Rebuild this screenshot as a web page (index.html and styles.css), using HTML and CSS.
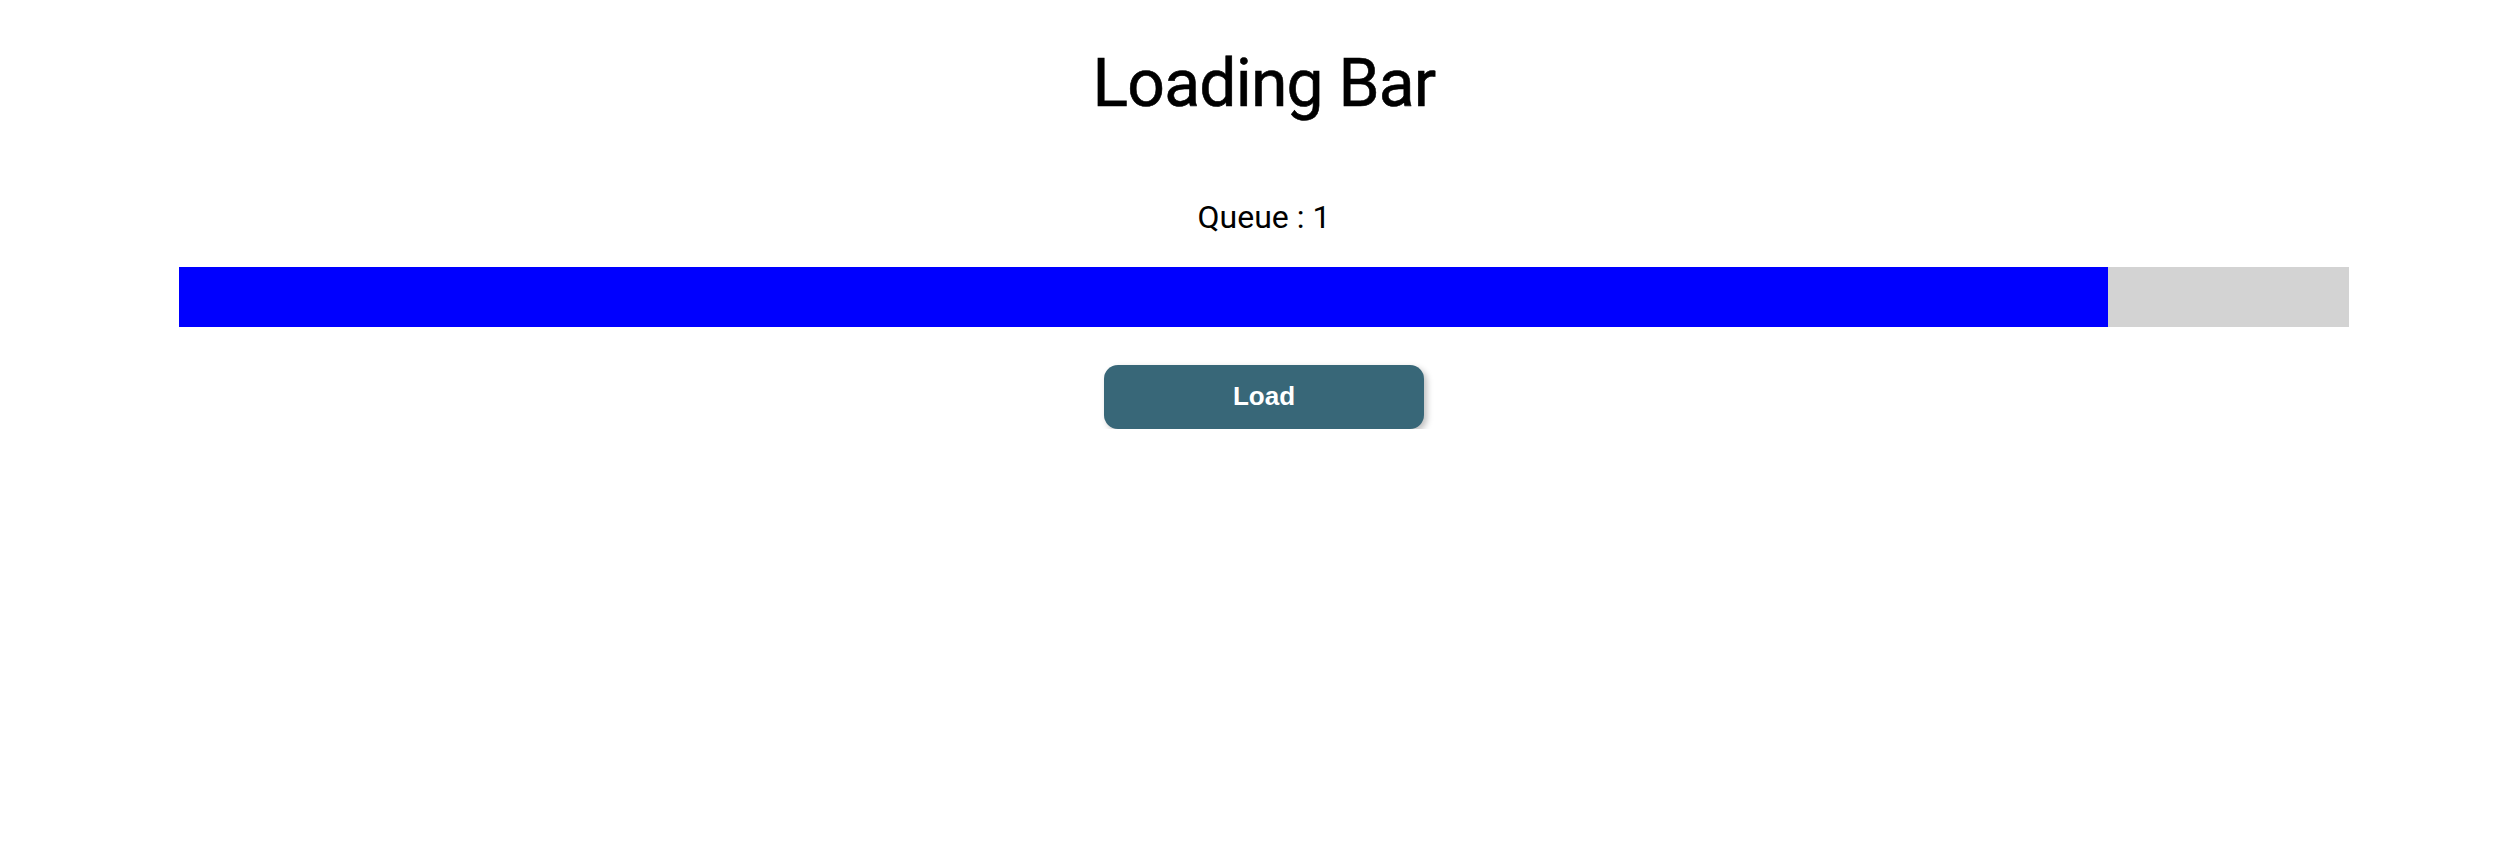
FILE: index.html
```html
<!DOCTYPE html>
<html>
<head>
<meta charset="utf-8">
<link rel="stylesheet" href="styles.css">
</head>
<body>
<div class="page">
  <h1 class="title">Loading Bar</h1>
  <div class="queue">Queue : 1</div>
  <div class="track"><div class="fill" style="width: 1929px"></div></div>
  <button class="load-btn">Load</button>
</div>
</body>
</html>
```
FILE: styles.css
```css
html, body {
  margin: 0;
  padding: 0;
  background: #ffffff;
}
.page {
  padding: 45px 0 0 16px;
  display: flex;
  flex-direction: column;
  align-items: center;
  font-family: Roboto, "Liberation Sans", sans-serif;
  color: #000;
}
.title {
  margin: 0;
  font-size: 66px;
  line-height: 78px;
  font-weight: 400;
  letter-spacing: -0.8px;
  -webkit-text-stroke: 0.6px #000;
}
.queue {
  margin-top: 76px;
  font-size: 32px;
  line-height: 36px;
  font-weight: 400;
}
.track {
  margin-top: 32px;
  width: 2170px;
  height: 60px;
  background: #d3d3d3;
  display: flex;
}
.fill {
  height: 100%;
  background: #0000ff;
}
.load-btn {
  margin-top: 38px;
  width: 320px;
  height: 64px;
  padding: 0 0 2px 0;
  border: none;
  border-radius: 14px;
  background: #386778;
  color: #ffffff;
  font-family: "Liberation Sans", Arial, sans-serif;
  font-weight: 700;
  font-size: 26px;
  box-shadow: 3px 3px 6px rgba(0, 0, 0, 0.25);
  cursor: pointer;
}
```
